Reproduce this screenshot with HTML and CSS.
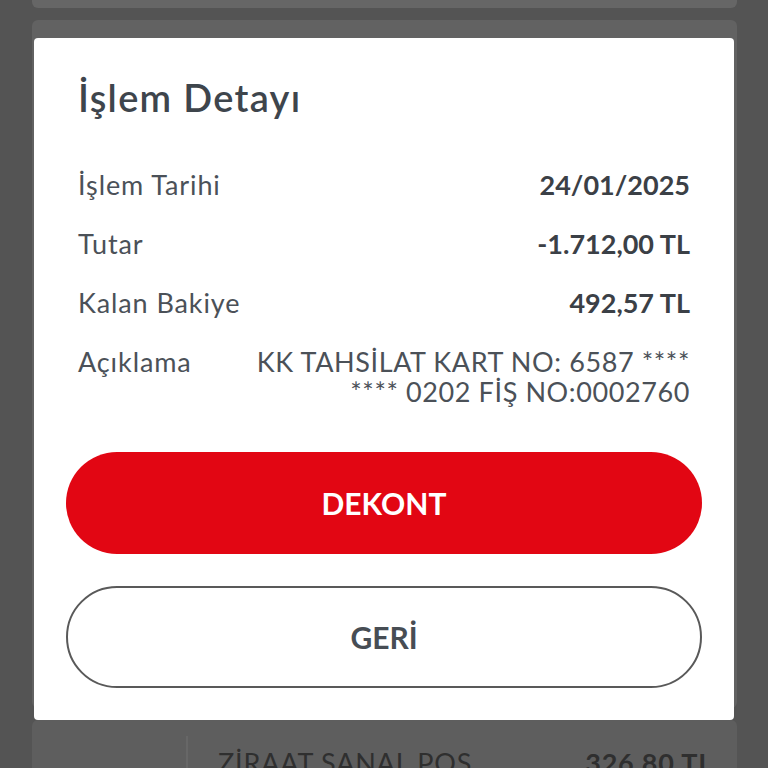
FILE: index.html
```html
<!doctype html>
<html lang="tr">
	<head>
		<meta charset="UTF-8">
		<title>İşlem Detayı</title>
		<link rel="stylesheet" href="styles.css">
	</head>
	<body>
		<div class="screen">
			<div class="list">
				<div class="card card-top"></div>
				<div class="card card-mid"></div>
				<div class="card card-row">
					<div class="cell-date"></div>
					<div class="cell-name">ZİRAAT SANAL POS</div>
					<div class="cell-amount">326,80 TL</div>
				</div>
			</div>

			<div class="modal">
				<h1 class="modal-title">İşlem Detayı</h1>
				<div class="details">
					<div class="row">
						<span class="label">İşlem Tarihi</span>
						<span class="value">24/01/2025</span>
					</div>
					<div class="row">
						<span class="label">Tutar</span>
						<span class="value">-1.712,00 TL</span>
					</div>
					<div class="row">
						<span class="label">Kalan Bakiye</span>
						<span class="value">492,57 TL</span>
					</div>
					<div class="row">
						<span class="label">Açıklama</span>
						<span class="value value-text">KK TAHSİLAT KART NO: 6587 **** **** 0202 FİŞ NO:0002760</span>
					</div>
				</div>
				<button class="btn btn-red">DEKONT</button>
				<button class="btn btn-line">GERİ</button>
			</div>
		</div>
	</body>
</html>
```

FILE: styles.css
```css
html, body{
	margin: 0;
	height: 100%;
	overflow: hidden;
}
body{
	background-color: #545454;
	font-family: "Lato", "Noto Sans", sans-serif;
}
.screen{
	position: relative;
	height: 768px;
}
.list{
	display: flex;
	flex-direction: column;
	gap: 12px;
	padding: 0 31px 0 32px;
}
.card{
	background-color: #616161;
	border-radius: 6px;
}
.card-top{
	height: 8px;
	background-color: #666;
	border-radius: 0 0 6px 6px;
}
.card-mid{
	height: 688px;
	background-color: #626262;
}
.card-row{
	display: flex;
	height: 120px;
	background-color: #5e5e5e;
	font-size: 27px;
	letter-spacing: 0.8px;
	color: #2f2f2f;
}
.cell-date{
	width: 154px;
	border-right: 2px solid #676767;
	margin-top: 16px;
}
.cell-name{
	flex: 1;
	padding: 26px 0 0 30px;
}
.cell-amount{
	padding: 26px 24px 0 0;
	font-weight: bold;
}

/* popup */
.modal{
	position: absolute;
	left: 34px;
	top: 38px;
	width: 700px;
	height: 682px;
	box-sizing: border-box;
	padding: 37px 32px 32px;
	background-color: #fff;
	border-radius: 4px;
	display: flex;
	flex-direction: column;
}
.modal-title{
	margin: 0 12px;
	font-size: 38px;
	line-height: 44px;
	font-weight: 600;
	letter-spacing: 1.3px;
	color: #3e454c;
}
.details{
	margin: 51px 12px 0;
	display: flex;
	flex-direction: column;
	gap: 29px;
}
.row{
	display: flex;
	justify-content: space-between;
	gap: 40px;
	font-size: 27px;
	line-height: 30px;
}
.label{
	color: #4b5158;
	white-space: nowrap;
	letter-spacing: 0.9px;
}
.value{
	color: #3b4046;
	font-weight: bold;
	text-align: right;
}
.value-text{
	font-weight: normal;
	color: #4b5158;
	letter-spacing: 0.6px;
	max-width: 440px;
}
.btn{
	height: 102px;
	border-radius: 51px;
	font-family: inherit;
	font-size: 30px;
	font-weight: bold;
	cursor: pointer;
}
.btn-red{
	margin-top: 45px;
	border: none;
	color: #fff;
	background-color: #e20613;
}
.btn-line{
	margin-top: 32px;
	border: 2px solid #595959;
	color: #474d54;
	background-color: #fff;
}
```
